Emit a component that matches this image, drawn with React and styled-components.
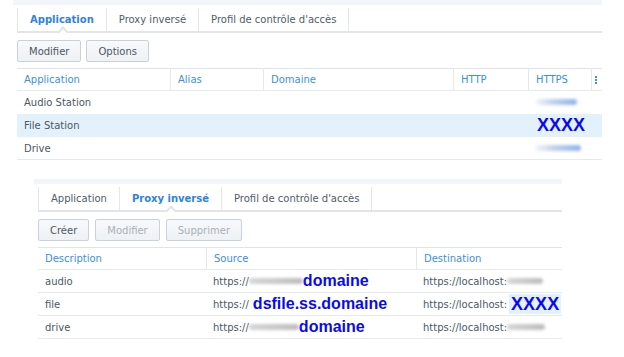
import React from "react";
import styled, { createGlobalStyle } from "styled-components";

const Global = createGlobalStyle`
  html, body { margin: 0; padding: 0; background: #ffffff; }
  body {
    font-family: "DejaVu Sans", Verdana, sans-serif;
    font-size: 10px;
    color: #4d5865;
  }
`;

const Page = styled.div`
  width: 624px;
  height: 357px;
  overflow: hidden;
  display: flex;
  flex-direction: column;
`;

const Panel = styled.section`
  margin-left: ${(p) => p.$left}px;
  margin-top: ${(p) => p.$top || 0}px;
  width: ${(p) => p.$width}px;
  display: flex;
  flex-direction: column;
`;

const Strip = styled.div`
  height: 5px;
  margin-left: -4px;
  background: #f2f6fb;
`;

const TabBar = styled.div`
  display: flex;
  height: 26px;
  border-bottom: 2px solid #e1e4e8;
`;

const Tab = styled.div`
  position: relative;
  display: flex;
  align-items: center;
  padding: 0 12px;
  margin: 3px 0 0;
  border-right: 1px solid #e4e8ec;
  border-left: ${(p) => (p.$first ? "1px solid #e4e8ec" : "none")};
  font-weight: ${(p) => (p.$active ? "bold" : "normal")};
  color: ${(p) => (p.$active ? "#2f82e2" : "#525c67")};
  white-space: nowrap;
  &::after {
    content: "";
    display: ${(p) => (p.$active ? "block" : "none")};
    position: absolute;
    left: calc(50% - 3px);
    bottom: -5px;
    width: 6px;
    height: 6px;
    background: #ffffff;
    border-top: 2px solid #e1e4e8;
    border-left: 2px solid #e1e4e8;
    transform: rotate(45deg);
    z-index: 1;
  }
`;

const Toolbar = styled.div`
  display: flex;
  gap: ${(p) => p.$gap}px;
  padding: 7px 0 6px;
`;

const Button = styled.div`
  height: 20px;
  display: flex;
  align-items: center;
  padding: 0 11px;
  border: 1px solid #c9d1da;
  border-radius: 2px;
  background: linear-gradient(#f7f9fb, #eef1f5);
  color: ${(p) => (p.$disabled ? "#a9b1ba" : "#4d5865")};
`;

const Row = styled.div`
  display: grid;
  grid-template-columns: ${(p) => p.$cols};
  height: ${(p) => (p.$head ? 21 : 22)}px;
  background: ${(p) => (p.$selected ? "#e3f1fd" : "transparent")};
  border-top: ${(p) => (p.$head ? "1px solid #dde4ec" : "none")};
  border-bottom: ${(p) => (p.$line ? "1px solid #e6eaef" : "1px solid transparent")};
`;

const HeadCell = styled.div`
  display: flex;
  align-items: center;
  padding-left: ${(p) => (p.$pad !== undefined ? p.$pad : 7)}px;
  color: #3c8fe6;
  border-left: ${(p) => (p.$first ? "none" : "1px solid #e4e9ef")};
  white-space: nowrap;
  overflow: hidden;
`;

const Cell = styled.div`
  display: flex;
  align-items: center;
  padding-left: 7px;
  white-space: nowrap;
  overflow: visible;
`;

const Big = styled.span`
  font-family: "Liberation Sans", Arial, sans-serif;
  font-weight: bold;
  font-size: ${(p) => p.$size || 16}px;
  color: #0a0af0;
  margin-left: ${(p) => p.$gap || 0}px;
  padding: 0 ${(p) => p.$pad || 0}px;
  background: ${(p) => p.$bg || "transparent"};
  line-height: ${(p) => (p.$bg ? "20px" : "normal")};
`;

const Blob = styled.span`
  display: inline-block;
  width: ${(p) => p.$w}px;
  height: 6px;
  border-radius: 3px;
  background: ${(p) => p.$color};
  filter: blur(1.5px);
`;

const MoreIcon = () => (
  <svg width="4" height="10" viewBox="0 0 4 10" aria-hidden="true">
    <rect x="1" y="1" width="2" height="2" fill="#3c8fe6" />
    <rect x="1" y="4" width="2" height="2" fill="#3c8fe6" />
    <rect x="1" y="7" width="2" height="2" fill="#3c8fe6" />
  </svg>
);

const topCols = "153px 93px 190px 75px 63px 11px";
const botCols = "168px 210px 146px";

const blueBlob = "linear-gradient(to right, rgba(200,212,230,0.2), #c4d3ea 40%, #8fb3ec)";
const grayBlob = "linear-gradient(to right, #d6d6d6, #bdbdbd)";

export default function App() {
  return (
    <Page>
      <Global />
      <Panel $left={17} $width={585}>
        <Strip />
        <TabBar>
          <Tab $first $active>Application</Tab>
          <Tab>Proxy inversé</Tab>
          <Tab>Profil de contrôle d'accès</Tab>
        </TabBar>
        <Toolbar $gap={5}>
          <Button>Modifier</Button>
          <Button>Options</Button>
        </Toolbar>
        <Row $cols={topCols} $head $line>
          <HeadCell $first>Application</HeadCell>
          <HeadCell>Alias</HeadCell>
          <HeadCell>Domaine</HeadCell>
          <HeadCell>HTTP</HeadCell>
          <HeadCell>HTTPS</HeadCell>
          <HeadCell $pad={2}><MoreIcon /></HeadCell>
        </Row>
        <Row $cols={topCols}>
          <Cell>Audio Station</Cell>
          <Cell />
          <Cell />
          <Cell />
          <Cell><Blob $w={42} $color={blueBlob} /></Cell>
          <Cell />
        </Row>
        <Row $cols={topCols} $selected>
          <Cell>File Station</Cell>
          <Cell />
          <Cell />
          <Cell />
          <Cell><Big $size={18} $gap={2}>XXXX</Big></Cell>
          <Cell />
        </Row>
        <Row $cols={topCols} $line>
          <Cell>Drive</Cell>
          <Cell />
          <Cell />
          <Cell />
          <Cell><Blob $w={46} $color={blueBlob} /></Cell>
          <Cell />
        </Row>
      </Panel>

      <Panel $left={38} $width={524} $top={19}>
        <Strip />
        <TabBar>
          <Tab $first>Application</Tab>
          <Tab $active>Proxy inversé</Tab>
          <Tab>Profil de contrôle d'accès</Tab>
        </TabBar>
        <Toolbar $gap={6}>
          <Button>Créer</Button>
          <Button $disabled>Modifier</Button>
          <Button $disabled>Supprimer</Button>
        </Toolbar>
        <Row $cols={botCols} $head $line>
          <HeadCell $first>Description</HeadCell>
          <HeadCell>Source</HeadCell>
          <HeadCell>Destination</HeadCell>
        </Row>
        <Row $cols={botCols} $line>
          <Cell>audio</Cell>
          <Cell>https://<Blob $w={54} $color={grayBlob} /><Big>domaine</Big></Cell>
          <Cell>https://localhost:<Blob $w={36} $color={grayBlob} /></Cell>
        </Row>
        <Row $cols={botCols} $line>
          <Cell>file</Cell>
          <Cell>https://<Big $gap={4}>dsfile.ss.domaine</Big></Cell>
          <Cell>https://localhost:<Big $size={18} $gap={2} $pad={2} $bg="#e3f1fd">XXXX</Big></Cell>
        </Row>
        <Row $cols={botCols} $line>
          <Cell>drive</Cell>
          <Cell>https://<Blob $w={50} $color={grayBlob} /><Big>domaine</Big></Cell>
          <Cell>https://localhost:<Blob $w={38} $color={grayBlob} /></Cell>
        </Row>
      </Panel>
    </Page>
  );
}
